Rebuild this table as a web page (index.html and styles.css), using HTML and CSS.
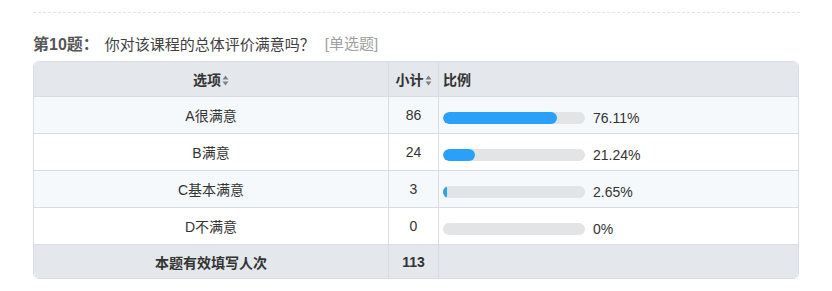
FILE: index.html
```html
<!DOCTYPE html>
<html lang="zh">
<head>
<meta charset="utf-8">
<link rel="stylesheet" href="styles.css">
</head>
<body>
<div class="wrap">
  <div class="divider"></div>
  <div class="title">
    <span class="qno">第10题<span class="punct">：</span></span>
    <span class="qtext">你对该课程的总体评价满意吗<span class="punct">？</span></span>
    <span class="qtype">[单选题]</span>
  </div>
  <table class="result">
    <colgroup>
      <col class="c1"><col class="c2"><col class="c3">
    </colgroup>
    <thead>
      <tr>
        <th class="center">选项<svg class="sort" width="7" height="11" viewBox="0 0 7 11"><path d="M3.5 0.5L6.5 4.5H0.5Z M3.5 10.5L6.5 6.5H0.5Z" fill="#7d8087"/></svg></th>
        <th class="center">小计<svg class="sort" width="7" height="11" viewBox="0 0 7 11"><path d="M3.5 0.5L6.5 4.5H0.5Z M3.5 10.5L6.5 6.5H0.5Z" fill="#7d8087"/></svg></th>
        <th class="left">比例</th>
      </tr>
    </thead>
    <tbody>
      <tr class="odd">
        <td class="center">A很满意</td>
        <td class="center">86</td>
        <td><div class="ratio"><div class="track"><div class="fill" style="width:114px"></div></div><span class="pct">76.11%</span></div></td>
      </tr>
      <tr>
        <td class="center">B满意</td>
        <td class="center">24</td>
        <td><div class="ratio"><div class="track"><div class="fill" style="width:32px"></div></div><span class="pct">21.24%</span></div></td>
      </tr>
      <tr class="odd">
        <td class="center">C基本满意</td>
        <td class="center">3</td>
        <td><div class="ratio"><div class="track"><div class="fill" style="width:4px"></div></div><span class="pct">2.65%</span></div></td>
      </tr>
      <tr>
        <td class="center">D不满意</td>
        <td class="center">0</td>
        <td><div class="ratio"><div class="track"><div class="fill" style="width:0px"></div></div><span class="pct">0%</span></div></td>
      </tr>
    </tbody>
    <tfoot>
      <tr>
        <td class="center">本题有效填写人次</td>
        <td class="center">113</td>
        <td></td>
      </tr>
    </tfoot>
  </table>
</div>
</body>
</html>
```

FILE: styles.css
```css
html, body {
  margin: 0;
  padding: 0;
  background: #ffffff;
}

body {
  font-family: "Liberation Sans", "Noto Sans CJK SC", sans-serif;
  color: #333333;
  font-size: 14px;
}

.wrap {
  padding-left: 33px;
  padding-top: 12px;
  width: 766px;
}

.divider {
  border-top: 1px dashed #e1e3e6;
  width: 767px;
}

.title {
  margin-top: 20px;
  height: 22px;
  line-height: 22px;
  display: flex;
  align-items: center;
  white-space: nowrap;
}

.punct {
  font-family: "Noto Sans CJK SC", sans-serif;
}

.qno {
  font-size: 16px;
  font-weight: bold;
  color: #555555;
}

.qtext {
  margin-left: 6px;
  font-size: 15px;
  color: #404040;
}

.qtype {
  margin-left: 10px;
  font-size: 15px;
  color: #a0a0a0;
}

.result {
  margin-top: 6px;
  width: 766px;
  table-layout: fixed;
  border-collapse: separate;
  border-spacing: 0;
  border: 1px solid #d9dce0;
  border-radius: 6px;
  overflow: hidden;
}

.c1 { width: 355px; }
.c2 { width: 50px; }
.c3 { width: 359px; }

.result th,
.result td {
  padding: 0 4px;
  border-right: 1px solid #d9dce0;
  border-bottom: 1px solid #d9dce0;
  font-size: 14px;
  white-space: nowrap;
}

.result th:last-child,
.result td:last-child {
  border-right: none;
}

.result thead th {
  height: 34px;
  background: #e4e7eb;
  font-weight: bold;
  color: #333333;
}

.result tbody td {
  height: 36px;
  background: #ffffff;
}

.result tbody tr.odd td {
  background: #f5f9fc;
}

.result tfoot td {
  height: 33px;
  background: #e4e7eb;
  font-weight: bold;
  border-bottom: none;
}

.center { text-align: center; }
.left { text-align: left; }

.sort {
  vertical-align: -1px;
  margin-left: 1px;
}

.ratio {
  display: flex;
  align-items: center;
  padding-top: 5px;
}

.track {
  width: 142px;
  height: 12px;
  border-radius: 6px;
  background: #e3e4e6;
  overflow: hidden;
}

.fill {
  height: 12px;
  border-radius: 6px;
  background: #2ba0f9;
}

.pct {
  margin-left: 8px;
  color: #333333;
}
```
